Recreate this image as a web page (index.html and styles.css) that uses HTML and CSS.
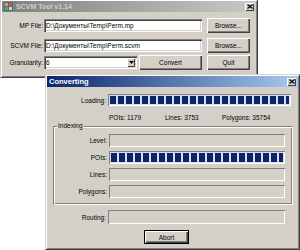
FILE: index.html
```html
<!DOCTYPE html>
<html>
<head>
<meta charset="utf-8">
<link rel="stylesheet" href="styles.css">
</head>
<body>
<div class="win main">
  <div class="tb tb-inactive">
    <svg class="appicon" width="9" height="9" viewBox="0 0 9 9">
      <rect x="0" y="0" width="9" height="9" fill="#3a6ea5"/>
      <rect x="1" y="1" width="3" height="3" fill="#e8a040"/>
      <rect x="5" y="1" width="3" height="3" fill="#e05030"/>
      <rect x="1" y="5" width="3" height="3" fill="#60b040"/>
      <rect x="5" y="5" width="3" height="3" fill="#f0e060"/>
    </svg>
    <span class="title">SCVM Tool v1.14</span>
    <span class="closebtn"><svg width="6" height="5" viewBox="0 0 6 5"><path d="M0.5 0.5 L5.5 4.5 M5.5 0.5 L0.5 4.5" stroke="#000" stroke-width="1.2"/></svg></span>
  </div>
  <div class="main-body">
    <div class="row r1">
      <span class="lbl">MP File:</span>
      <span class="edit path">D:\Документы\Temp\Perm.mp</span>
      <span class="btn browse">Browse...</span>
    </div>
    <div class="row r2">
      <span class="lbl">SCVM File:</span>
      <span class="edit path">D:\Документы\Temp\Perm.scvm</span>
      <span class="btn browse">Browse...</span>
    </div>
    <div class="row r3">
      <span class="lbl">Granularity:</span>
      <span class="edit combo"><span class="cval">6</span><span class="dd"><svg width="5" height="3" viewBox="0 0 5 3"><path d="M0 0 H5 L2.5 3 Z" fill="#000"/></svg></span></span>
      <span class="btn convert">Convert</span>
      <span class="btn browse">Quit</span>
    </div>
  </div>
</div>

<div class="win conv">
  <div class="tb tb-active">
    <span class="title">Converting</span>
    <span class="closebtn"><svg width="6" height="5" viewBox="0 0 6 5"><path d="M0.5 0.5 L5.5 4.5 M5.5 0.5 L0.5 4.5" stroke="#000" stroke-width="1.2"/></svg></span>
  </div>
  <div class="conv-body">
    <div class="prow loading">
      <span class="plbl">Loading:</span>
      <span class="pbar full"></span>
    </div>
    <div class="stats">
      <span class="st s1">POIs: 1179</span>
      <span class="st s2">Lines: 3753</span>
      <span class="st s3">Polygons: 35754</span>
    </div>
    <fieldset class="group">
      <legend>Indexing</legend>
      <div class="prow g first"><span class="plbl">Level:</span><span class="pbar"></span></div>
      <div class="prow g"><span class="plbl">POIs:</span><span class="pbar full"></span></div>
      <div class="prow g"><span class="plbl">Lines:</span><span class="pbar"></span></div>
      <div class="prow g"><span class="plbl">Polygons:</span><span class="pbar"></span></div>
    </fieldset>
    <div class="prow routing">
      <span class="plbl">Routing:</span>
      <span class="pbar"></span>
    </div>
    <div class="abort-row">
      <span class="btn abort">Abort</span>
    </div>
  </div>
</div>
</body>
</html>
```
FILE: styles.css
```css
* { box-sizing: border-box; }
html, body { margin: 0; padding: 0; }
body {
  width: 300px;
  height: 250px;
  background: #ffffff;
  font-family: "Liberation Sans", Arial, sans-serif;
  font-size: 6.5px;
  color: #000;
  position: relative;
  overflow: hidden;
}

.win {
  position: absolute;
  background: #d4d0c8;
  border: 1px solid;
  border-color: #d4d0c8 #404040 #404040 #d4d0c8;
  box-shadow: inset 1px 1px 0 #fff, inset -1px -1px 0 #808080;
}
.main { left: 0; top: -1px; width: 258px; height: 79px; }
.conv { left: 45px; top: 74px; width: 255px; height: 176px; }

.tb {
  height: 11px;
  margin: 1px 1px 0 1px;
  display: flex;
  align-items: center;
  padding: 0 2px;
}
.tb-inactive { background: linear-gradient(to right, #808080, #c8c8c8); }
.tb-active { background: linear-gradient(to right, #0a246a, #a6caf0); }
.appicon { margin-right: 3px; }
.title { font-weight: bold; font-size: 7px; flex: 1; }
.tb-inactive .title { color: #d4d0c8; }
.tb-active .title { color: #fff; font-size: 7.5px; }
.closebtn {
  width: 9px; height: 8px;
  background: #d4d0c8;
  display: flex; align-items: center; justify-content: center;
  box-shadow: inset 1px 1px 0 #fff, inset -1px -1px 0 #404040;
}

.main-body { padding: 6px 0 0 0; }
.row { display: flex; align-items: center; height: 15px; }
.r2 { margin-top: 5px; }
.r3 { margin-top: 2px; }
.lbl { width: 43px; text-align: right; padding-right: 1px; white-space: nowrap; }

.edit {
  background: #fff;
  height: 13px;
  display: flex; align-items: center;
  padding-left: 2px;
  box-shadow: inset 1px 1px 0 #808080, inset 2px 2px 0 #404040, inset -1px -1px 0 #fff, inset -2px -2px 0 #d4d0c8;
  white-space: nowrap;
}
.path { width: 158px; }
.combo { width: 93px; padding-right: 2px; }
.cval { flex: 1; }
.dd {
  width: 8px; height: 9px;
  background: #d4d0c8;
  display: flex; align-items: center; justify-content: center;
  box-shadow: inset 1px 1px 0 #fff, inset -1px -1px 0 #404040;
}

.btn {
  height: 15px;
  background: #d4d0c8;
  display: flex; align-items: center; justify-content: center;
  box-shadow: inset 1px 1px 0 #fff, inset -1px -1px 0 #404040, inset -2px -2px 0 #808080;
}
.browse { width: 43px; margin-left: 5px; }
.convert { width: 63px; margin-left: 2px; }

.conv-body { padding: 7px 0 0 0; }
.prow { display: flex; align-items: center; }
.plbl { width: 62px; text-align: right; padding-right: 2px; }
.pbar {
  height: 12px;
  width: 183px;
  background: #d4d0c8;
  box-shadow: inset 1px 1px 0 #808080, inset -1px -1px 0 #fff;
}
.pbar.full {
  background: repeating-linear-gradient(to right, #0a246a 0 6px, #d8dcec 6px 8px) 2px 2px / calc(100% - 4px) calc(100% - 4px) no-repeat, #d8dcec;
  box-shadow: inset 1px 1px 0 #808080, inset -1px -1px 0 #fff;
}
.stats { height: 8px; margin-top: 8px; display: flex; }
.st { white-space: nowrap; }
.s1 { margin-left: 63px; width: 56px; }
.s2 { width: 57px; }

.group {
  margin: 4px 6px 0 7px;
  padding: 0 4px 4px 0;
  border: none;
  box-shadow: inset 1px 1px 0 #808080, inset 2px 2px 0 #fff, inset -1px -1px 0 #fff, inset -2px -2px 0 #808080;
  height: 79px;
  position: relative;
}
.group legend {
  position: absolute;
  left: 4px; top: -4px;
  background: #d4d0c8;
  padding: 0 1px;
  line-height: 8px;
}
.g .plbl { width: 56px; }
.g .pbar { width: 176px; height: 13px; }
.prow.g { margin-top: 4px; }
.prow.g.first { margin-top: 8px; }

.routing { margin-top: 5px; }
.routing .pbar { height: 14px; width: 177px; }
.abort-row { display: flex; margin-top: 6px; padding-left: 98px; }
.abort {
  width: 45px; height: 14px;
  box-shadow: inset 0 0 0 1px #000, inset 2px 2px 0 #fff, inset -2px -2px 0 #404040, inset -3px -3px 0 #808080;
}
```
